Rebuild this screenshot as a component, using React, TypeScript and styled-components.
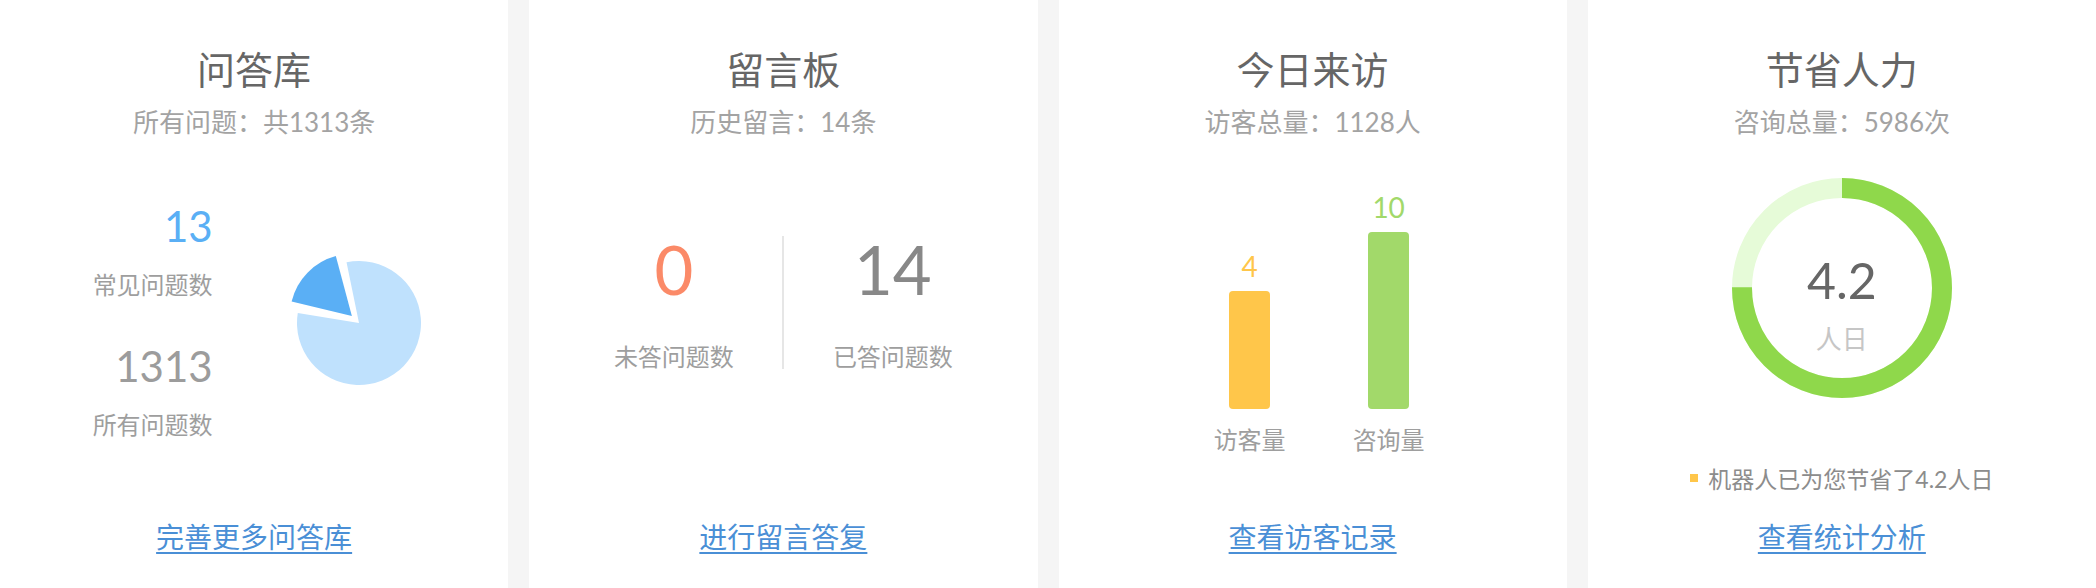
import styled, { createGlobalStyle } from "styled-components";

// ── Global ────────────────────────────────────────────────

const GlobalStyle = createGlobalStyle`
  html, body {
    margin: 0;
    padding: 0;
    background: #f5f5f5;
  }
  * {
    box-sizing: border-box;
  }
  body {
    font-family: "Lato", "Noto Sans CJK SC", sans-serif;
  }
`;

// ── Layout ────────────────────────────────────────────────

const Board = styled.div`
  display: grid;
  grid-template-columns: repeat(4, 1fr);
  gap: 21px;
  height: 588px;
`;

const Card = styled.section`
  background: #fff;
  display: flex;
  flex-direction: column;
  align-items: center;
  padding: 46px 0 36px;
  overflow: hidden;
`;

const Title = styled.h2`
  margin: 0;
  font-size: 38px;
  line-height: 46px;
  font-weight: 400;
  color: #666;
`;

const Subtitle = styled.div`
  margin-top: 14px;
  font-size: 26px;
  line-height: 32px;
  color: #a3a3a3;
`;

const Body = styled.div<{ $top: number }>`
  flex: 1;
  width: 100%;
  display: flex;
  flex-direction: column;
  align-items: center;
  padding-top: ${(p) => p.$top}px;
`;

const FooterLink = styled.a`
  font-size: 28px;
  line-height: 30px;
  color: #4a8fd6;
  text-decoration: underline;
  text-decoration-thickness: 2px;
  text-underline-offset: 4px;
  cursor: pointer;
`;

const Label = styled.div`
  font-size: 24px;
  line-height: 32px;
  color: #9e9e9e;
`;

// ── Card 1: 问答库 ─────────────────────────────────────────

const QaRow = styled.div`
  display: flex;
  align-items: center;
  justify-content: center;
  gap: 71px;
  width: 100%;
  padding-left: 18px;
`;

const QaColumn = styled.div`
  display: flex;
  flex-direction: column;
  align-items: flex-end;
  width: 120px;
`;

const QaNumber = styled.div<{ $color: string; $gap?: number }>`
  font-size: 42px;
  line-height: 52px;
  color: ${(p) => p.$color};
  margin-top: ${(p) => p.$gap ?? 0}px;
  margin-bottom: 17px;
`;

const PieSvg = styled.svg`
  display: block;
  margin-top: 4px;
`;

function Pie() {
  return (
    <PieSvg width="150" height="150" viewBox="0 0 150 150">
      <path
        d="M75 75 L62.53 14.27 A62 62 0 1 1 13.8 65.09 Z"
        fill="#bfe1fd"
      />
      <path
        d="M67.87 67.99 L7.61 53.41 A62 62 0 0 1 51.82 8.1 Z"
        fill="#5aaff5"
      />
    </PieSvg>
  );
}

// ── Card 2: 留言板 ─────────────────────────────────────────

const SplitRow = styled.div`
  display: flex;
  justify-content: center;
  align-items: stretch;
`;

const SplitCell = styled.div`
  width: 217px;
  display: flex;
  flex-direction: column;
  align-items: center;
  gap: 32px;
`;

const BigNumber = styled.div<{ $color: string }>`
  font-size: 67px;
  line-height: 80px;
  color: ${(p) => p.$color};
`;

const Divider = styled.div`
  width: 2px;
  background: #e6e6e6;
  margin: 7px 0 4px;
`;

// ── Card 3: 今日来访 ───────────────────────────────────────

const BarRow = styled.div`
  display: flex;
  align-items: flex-end;
  justify-content: center;
  gap: 39px;
  width: 100%;
  padding-left: 13px;
`;

const BarColumn = styled.div`
  width: 100px;
  display: flex;
  flex-direction: column;
  align-items: center;
`;

const BarValue = styled.div<{ $color: string }>`
  font-size: 28px;
  line-height: 30px;
  color: ${(p) => p.$color};
  margin-bottom: 10px;
`;

const Bar = styled.div<{ $color: string }>`
  width: 41px;
  border-radius: 4px;
  background: ${(p) => p.$color};
  margin-bottom: 15px;
`;

// ── Card 4: 节省人力 ───────────────────────────────────────

const RingWrap = styled.div`
  position: relative;
  width: 220px;
  height: 220px;
`;

const RingCenter = styled.div`
  position: absolute;
  top: 74px;
  left: 0;
  right: 0;
  display: flex;
  flex-direction: column;
  align-items: center;
  gap: 15px;
`;

const RingValue = styled.div`
  font-size: 50px;
  line-height: 56px;
  color: #666;
`;

const RingUnit = styled.div`
  font-size: 26px;
  line-height: 32px;
  color: #c6c6c6;
`;

const Legend = styled.div`
  display: flex;
  align-items: center;
  gap: 10px;
  margin-top: 65px;
  font-size: 23px;
  line-height: 32px;
  color: #8c8c8c;
`;

const LegendDot = styled.span`
  width: 8px;
  height: 8px;
  background: #ffc64a;
  margin-top: -3px;
`;

function Ring() {
  const r = 100;
  const c = 2 * Math.PI * r;
  return (
    <svg width="220" height="220" viewBox="0 0 220 220">
      <circle cx="110" cy="110" r={r} fill="none" stroke="#e6fbd8" strokeWidth="20" />
      <circle
        cx="110"
        cy="110"
        r={r}
        fill="none"
        stroke="#8fd84b"
        strokeWidth="20"
        strokeDasharray={`${c * 0.75} ${c}`}
        transform="rotate(-90 110 110)"
      />
    </svg>
  );
}

// ── Component ─────────────────────────────────────────────

const bars = [
  { label: "访客量", value: 4, height: 118, color: "#ffc64a" },
  { label: "咨询量", value: 10, height: 177, color: "#a2d96a" },
];

export default function App() {
  return (
    <>
      <GlobalStyle />
      <Board>
        <Card>
          <Title>问答库</Title>
          <Subtitle>所有问题：共1313条</Subtitle>
          <Body $top={62}>
            <QaRow>
              <QaColumn>
                <QaNumber $color="#5aaff5">13</QaNumber>
                <Label>常见问题数</Label>
                <QaNumber $color="#9c9c9c" $gap={39}>
                  1313
                </QaNumber>
                <Label>所有问题数</Label>
              </QaColumn>
              <Pie />
            </QaRow>
          </Body>
          <FooterLink>完善更多问答库</FooterLink>
        </Card>

        <Card>
          <Title>留言板</Title>
          <Subtitle>历史留言：14条</Subtitle>
          <Body $top={91}>
            <SplitRow>
              <SplitCell>
                <BigNumber $color="#fb8a68">0</BigNumber>
                <Label>未答问题数</Label>
              </SplitCell>
              <Divider />
              <SplitCell>
                <BigNumber $color="#888">14</BigNumber>
                <Label>已答问题数</Label>
              </SplitCell>
            </SplitRow>
          </Body>
          <FooterLink>进行留言答复</FooterLink>
        </Card>

        <Card>
          <Title>今日来访</Title>
          <Subtitle>访客总量：1128人</Subtitle>
          <Body $top={54}>
            <BarRow>
              {bars.map((b) => (
                <BarColumn key={b.label}>
                  <BarValue $color={b.color}>{b.value}</BarValue>
                  <Bar $color={b.color} style={{ height: b.height }} />
                  <Label>{b.label}</Label>
                </BarColumn>
              ))}
            </BarRow>
          </Body>
          <FooterLink>查看访客记录</FooterLink>
        </Card>

        <Card>
          <Title>节省人力</Title>
          <Subtitle>咨询总量：5986次</Subtitle>
          <Body $top={40}>
            <RingWrap>
              <Ring />
              <RingCenter>
                <RingValue>4.2</RingValue>
                <RingUnit>人日</RingUnit>
              </RingCenter>
            </RingWrap>
            <Legend>
              <LegendDot />
              机器人已为您节省了4.2人日
            </Legend>
          </Body>
          <FooterLink>查看统计分析</FooterLink>
        </Card>
      </Board>
    </>
  );
}
